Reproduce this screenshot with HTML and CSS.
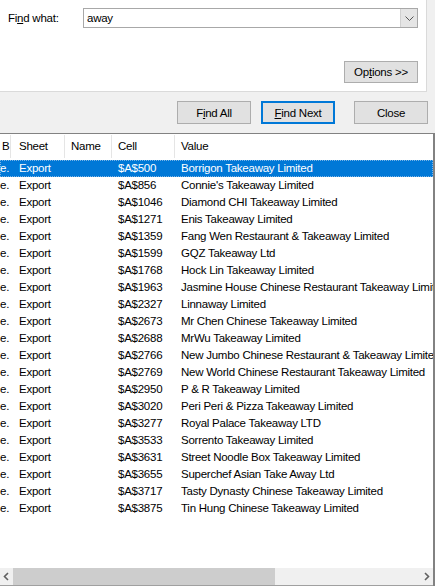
FILE: index.html
```html
<!DOCTYPE html>
<html lang="en">
<head>
  <meta charset="UTF-8" />
  <title>Find and Replace</title>
  <link rel="stylesheet" href="styles.css">
</head>
<body>
  <div class="find-panel">
    <div class="find-row">
      <label class="find-label">Fi<u>n</u>d what:</label>
      <div class="combo">
        <span class="combo-text">away</span>
        <span class="combo-btn">
          <svg width="9" height="5" viewBox="0 0 9 5"><path d="M0.5 0.5 L4.5 4.5 L8.5 0.5" fill="none" stroke="#555" stroke-width="1"/></svg>
        </span>
      </div>
    </div>
    <div class="options-row">
      <button class="btn btn-options">Op<u>t</u>ions &gt;&gt;</button>
    </div>
  </div>

  <div class="actions">
    <button class="btn">F<u>i</u>nd All</button>
    <button class="btn btn-default"><u>F</u>ind Next</button>
    <button class="btn btn-close">Close</button>
  </div>

  <div class="results">
    <div class="results-head">
      <div class="col">B</div>
      <div class="col">Sheet</div>
      <div class="col">Name</div>
      <div class="col">Cell</div>
      <div class="col">Value</div>
    </div>
    <div class="results-body" id="results"></div>
    <div class="hscroll">
      <span class="arrow">
        <svg width="7" height="9" viewBox="0 0 7 9"><path d="M5 1 L1.5 4.5 L5 8" fill="none" stroke="#606060" stroke-width="1.6"/></svg>
      </span>
      <div class="track"><div class="thumb"></div></div>
      <span class="arrow">
        <svg width="7" height="9" viewBox="0 0 7 9"><path d="M2 1 L5.5 4.5 L2 8" fill="none" stroke="#606060" stroke-width="1.6"/></svg>
      </span>
    </div>
  </div>

  <script>
    const found = [
      ['$A$500', 'Borrigon Takeaway Limited'],
      ['$A$856', "Connie's Takeaway Limited"],
      ['$A$1046', 'Diamond CHI Takeaway Limited'],
      ['$A$1271', 'Enis Takeaway Limited'],
      ['$A$1359', 'Fang Wen Restaurant & Takeaway Limited'],
      ['$A$1599', 'GQZ Takeaway Ltd'],
      ['$A$1768', 'Hock Lin Takeaway Limited'],
      ['$A$1963', 'Jasmine House Chinese Restaurant Takeaway Limited'],
      ['$A$2327', 'Linnaway Limited'],
      ['$A$2673', 'Mr Chen Chinese Takeaway Limited'],
      ['$A$2688', 'MrWu Takeaway Limited'],
      ['$A$2766', 'New Jumbo Chinese Restaurant & Takeaway Limited'],
      ['$A$2769', 'New World Chinese Restaurant Takeaway Limited'],
      ['$A$2950', 'P & R Takeaway Limited'],
      ['$A$3020', 'Peri Peri & Pizza Takeaway Limited'],
      ['$A$3277', 'Royal Palace Takeaway LTD'],
      ['$A$3533', 'Sorrento Takeaway Limited'],
      ['$A$3631', 'Street Noodle Box Takeaway Limited'],
      ['$A$3655', 'Superchef Asian Take Away Ltd'],
      ['$A$3717', 'Tasty Dynasty Chinese Takeaway Limited'],
      ['$A$3875', 'Tin Hung Chinese Takeaway Limited']
    ];

    const list = document.getElementById('results');
    found.forEach(function (row, i) {
      const div = document.createElement('div');
      div.className = i === 0 ? 'row selected' : 'row';
      div.innerHTML =
        '<div class="cell">e.</div>' +
        '<div class="cell">Export</div>' +
        '<div class="cell"></div>' +
        '<div class="cell">' + row[0] + '</div>' +
        '<div class="cell"></div>';
      div.lastChild.textContent = row[1];
      list.appendChild(div);
    });
  </script>
</body>
</html>
```

FILE: styles.css
```css
* {
  box-sizing: border-box;
  margin: 0;
  padding: 0;
}

html, body {
  width: 435px;
  height: 586px;
  overflow: hidden;
}

body {
  background: #f0f0f0;
  font-family: "Segoe UI", "Liberation Sans", Arial, sans-serif;
  font-size: 11.5px;
  letter-spacing: -0.25px;
  color: #000;
}

u {
  text-decoration: underline;
  text-underline-offset: 1px;
}

/* Top white panel with the search field */
.find-panel {
  width: 427px;
  height: 92px;
  background: #fff;
  border-right: 1px solid #dadada;
  border-bottom: 1px solid #dadada;
  padding: 8px 8px 0 8px;
}

.find-row {
  display: flex;
  align-items: center;
  height: 20px;
}

.find-label {
  width: 75px;
  line-height: 20px;
}

.combo {
  flex: 1;
  display: flex;
  height: 20px;
  border: 1px solid #a8a8a8;
}

.combo-text {
  flex: 1;
  padding-left: 3px;
  line-height: 18px;
}

.combo-btn {
  width: 17px;
  background: #e5e5e5;
  border-left: 1px solid #d0d0d0;
  display: flex;
  align-items: center;
  justify-content: center;
}

.options-row {
  display: flex;
  justify-content: flex-end;
  margin-top: 33px;
}

/* Buttons */
.btn {
  width: 74px;
  height: 23px;
  background: #e1e1e1;
  border: 1px solid #adadad;
  font-family: inherit;
  font-size: 11.5px;
  letter-spacing: -0.25px;
  color: #000;
}

.btn-options {
  height: 22px;
}

.btn-default {
  border: 2px solid #0078d7;
}

.actions {
  display: flex;
  gap: 10px;
  padding-left: 177px;
  margin-top: 9px;
}

.btn-close {
  margin-left: 9px;
}

/* Results list */
.results {
  margin-top: 9px;
  height: 453px;
  background: #fff;
  border-top: 1px solid #828282;
  border-right: 2px solid #828282;
  display: flex;
  flex-direction: column;
}

.results-head,
.row {
  display: grid;
  grid-template-columns: 11px 54px 47px 63px 1fr;
  white-space: nowrap;
}

.results-head {
  height: 26px;
  padding-top: 1px;
}

.results-head .col {
  height: 23px;
  line-height: 23px;
  padding-left: 6px;
  border-right: 1px solid #e5e5e5;
  overflow: hidden;
}

.results-head .col:first-child {
  padding-left: 2px;
}

.results-head .col:nth-child(2),
.row .cell:nth-child(2) {
  padding-left: 8px;
}

.results-head .col:last-child {
  border-right: none;
}

.results-body {
  flex: 1;
  overflow: hidden;
}

.row {
  height: 17px;
  line-height: 17px;
}

.cell {
  padding-left: 6px;
  overflow: hidden;
}

.row .cell:first-child {
  padding-left: 0;
}

.row.selected {
  background: #0078d7;
  color: #fff;
  outline: 1px dotted #7ab4e6;
  outline-offset: -1px;
}

/* Horizontal scrollbar */
.hscroll {
  height: 18px;
  display: flex;
  background: #f0f0f0;
  border-bottom: 1px solid #a0a0a0;
}

.arrow {
  width: 13px;
  display: flex;
  align-items: center;
  justify-content: center;
}

.track {
  flex: 1;
}

.thumb {
  width: 262px;
  height: 17px;
  background: #cdcdcd;
}
```
